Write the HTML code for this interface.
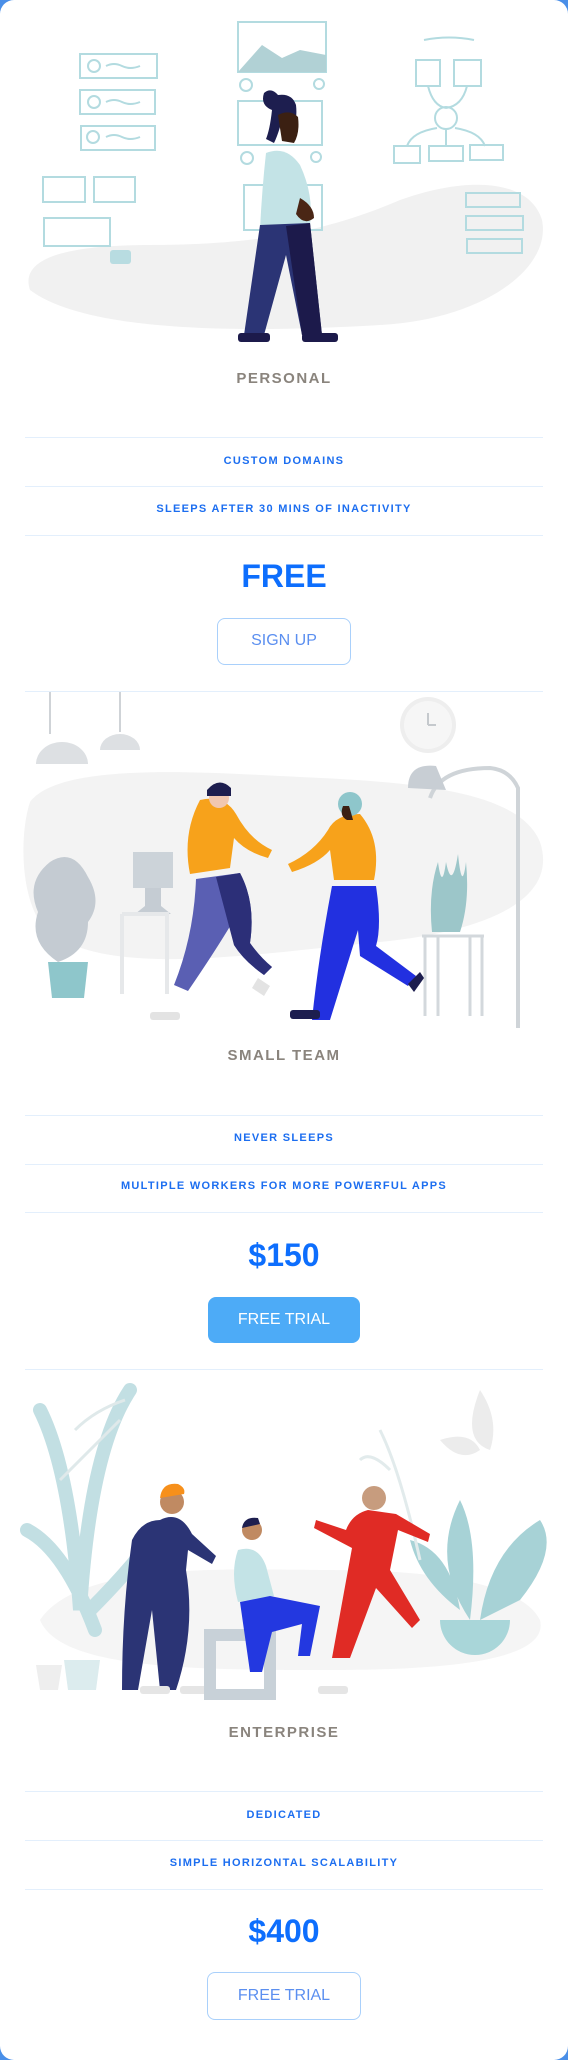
<!DOCTYPE html>
<html><head><meta charset="utf-8"><style>
*{margin:0;padding:0;box-sizing:border-box}
html,body{width:568px;height:2060px;background:#4a8fe8;overflow:hidden}
.card{position:absolute;left:0;top:0;width:568px;height:2060px;background:#fff;border-radius:14px;overflow:hidden;font-family:"Liberation Sans",sans-serif}
.t{position:absolute;left:0;width:568px;text-align:center}
.title{color:#8a847d;font-size:15px;font-weight:bold;letter-spacing:1.5px}
.feat{color:#1c6ef0;font-size:11px;font-weight:bold;letter-spacing:1.3px}
.price{color:#0d6efd;font-size:32px;font-weight:bold}
.line{position:absolute;left:25px;width:518px;height:1px;background:#e3effc}
.btn{position:absolute;border-radius:8px;text-align:center;font-size:16px}
.ob{border:1.5px solid #a9d0fb;color:#5b8ff0;background:#fff}
.fb{background:#4dabf7;color:#fff}
svg{position:absolute;left:0}
</style></head><body><div class="card">

<svg style="top:0" width="568" height="350" viewBox="0 0 568 350">
<path d="M30 290 C20 260 60 245 150 245 C260 245 330 230 400 200 C470 175 530 180 542 220 C552 270 480 320 380 325 C260 332 90 335 30 290Z" fill="#f1f1f1"/>
<g fill="none" stroke="#b3dbe0" stroke-width="2">
<rect x="80" y="54" width="77" height="24"/><rect x="80" y="90" width="75" height="24"/><rect x="81" y="126" width="74" height="24"/>
<circle cx="94" cy="66" r="6"/><circle cx="94" cy="102" r="6"/><circle cx="93" cy="137" r="6"/>
<path d="M106 66 q8 -4 16 0 t18 0 M106 102 q8 -4 16 0 t18 0 M106 137 q8 -4 16 0 t18 0"/>
<rect x="43" y="177" width="42" height="25"/><rect x="94" y="177" width="41" height="25"/><rect x="44" y="218" width="66" height="28"/>
<rect x="238" y="22" width="88" height="50"/><rect x="238" y="101" width="84" height="44"/><rect x="244" y="185" width="78" height="45"/>
<circle cx="246" cy="85" r="6"/><circle cx="319" cy="84" r="5"/><circle cx="247" cy="158" r="6"/><circle cx="316" cy="157" r="5"/>
<rect x="416" y="60" width="24" height="26"/><rect x="454" y="60" width="27" height="26"/><circle cx="446" cy="118" r="11"/>
<rect x="394" y="146" width="26" height="17"/><rect x="429" y="146" width="34" height="15"/><rect x="470" y="145" width="33" height="15"/>
<path d="M428 86 q5 20 18 22 M467 86 q-5 20 -21 22 M446 129 v18 M437 128 q-25 4 -30 18 M455 128 q25 4 30 18 M424 40 q25 -5 50 0"/>
<rect x="466" y="193" width="54" height="14"/><rect x="466" y="216" width="57" height="14"/><rect x="467" y="239" width="55" height="14"/>
</g>
<path d="M238 72 L262 45 L282 58 L300 50 L326 55 L326 72Z" fill="#b1d1d5"/>
<rect x="110" y="250" width="21" height="14" rx="3" fill="#b8dce1"/>
<path d="M272 110 q-12 -5 -8 -17 q7 -6 14 2 q14 -2 18 10 q2 18 -6 24 l-10 -2 q-3 10 -6 16 l-8 -4 q4 -10 6 -29z" fill="#1d1e4f"/>
<path d="M278 115 q12 -6 20 2 q2 16 -4 26 l-12 -2z" fill="#3b2012"/>
<path d="M266 153 q20 -8 34 12 q14 30 10 60 l-50 4 q2 -40 6 -76z" fill="#c3e3e6"/>
<path d="M260 225 l50 -2 l12 112 l-20 0 l-16 -80 l-22 80 l-20 0z" fill="#2b3475"/>
<path d="M286 226 l24 -3 l12 112 l-20 0z" fill="#1c1a4b"/>
<rect x="238" y="333" width="32" height="9" rx="3" fill="#1c1a4b"/><rect x="302" y="333" width="36" height="9" rx="3" fill="#1c1a4b"/>
<path d="M300 198 q14 8 14 20 q-10 8 -18 -4z" fill="#4a2615"/>
</svg>
<div class="t title" style="top:370px">PERSONAL</div>
<div class="line" style="top:437px"></div>
<div class="t feat" style="top:455px">CUSTOM DOMAINS</div>
<div class="line" style="top:486px"></div>
<div class="t feat" style="top:503px">SLEEPS AFTER 30 MINS OF INACTIVITY</div>
<div class="line" style="top:535px"></div>
<div class="t price" style="top:558px">FREE</div>
<div class="btn ob" style="left:217px;top:618px;width:134px;height:47px;line-height:44px">SIGN UP</div>
<div class="line" style="top:691px"></div>

<svg style="top:692px" width="568" height="340" viewBox="0 0 568 340">
<path d="M30 110 C60 70 200 80 300 85 C420 90 520 100 540 150 C560 210 480 240 380 250 C250 262 90 290 40 230 C20 200 20 140 30 110Z" fill="#f3f3f3"/>
<path d="M50 0 v42 M120 0 v40" stroke="#cfd3d7" stroke-width="2"/>
<path d="M36 72 a26 22 0 0 1 52 0z M100 58 a20 16 0 0 1 40 0z" fill="#dde0e3"/>
<circle cx="428" cy="33" r="28" fill="#eeeeee"/><circle cx="428" cy="33" r="24" fill="#f6f6f6"/>
<path d="M428 33 v-12 M428 33 h8" stroke="#c5c9cd" stroke-width="2"/>
<path d="M430 106 q10 -30 60 -30 q20 2 28 20 v240" fill="none" stroke="#cfd4d8" stroke-width="4"/>
<path d="M408 96 q0 -25 28 -22 l10 24z" fill="#c8ced4"/>
<path d="M425 244 v80 M438 244 v80 M470 244 v80 M482 244 v80 M422 244 h62" stroke="#d3d8dc" stroke-width="3"/>
<path d="M432 240 q-4 -40 6 -70 q4 30 8 0 q6 30 12 -8 q4 40 8 8 q4 40 -6 70z" fill="#9cc6c9"/>
<rect x="133" y="160" width="40" height="36" fill="#ccd3d9"/><path d="M145 196 v18 l-10 8 h36 l-10 -8 v-18z" fill="#c5ccd3"/>
<path d="M122 222 h45 v80 M122 222 v80" stroke="#e6e8ea" stroke-width="4" fill="none"/>
<path d="M50 170 q-25 20 -12 50 q-10 30 20 50 q30 -10 30 -40 q15 -20 0 -45 q-15 -30 -38 -15z" fill="#c4cbd2"/>
<path d="M48 270 h40 l-4 36 h-32z" fill="#8ec6cb"/>
<path d="M200 108 q24 -6 36 14 q14 26 36 36 l-4 8 q-22 -6 -34 -20 l-4 30 l-40 6 q-8 -40 10 -74z" fill="#f7a21b"/>
<circle cx="219" cy="106" r="10" fill="#f1c7b0"/><path d="M207 98 q12 -14 24 -2 v8 h-24z" fill="#1d1e4f"/>
<path d="M196 187 l44 -6 q16 30 10 70 q10 14 22 24 l-8 8 q-20 -14 -30 -30 l-2 -22 q-18 30 -44 68 l-14 -6 q20 -50 22 -106z" fill="#5a5fb3"/>
<path d="M216 185 l24 -4 q16 30 10 70 q10 14 22 24 l-8 8 q-20 -14 -30 -30z" fill="#2c2f78"/>
<rect x="150" y="320" width="30" height="8" rx="3" fill="#e3e3e3"/><path d="M258 286 l12 8 l-6 10 l-12 -8z" fill="#e3e3e3"/>
<path d="M360 122 q-24 0 -32 16 q-14 22 -40 34 l4 8 q26 -8 38 -22 l4 30 h40 q8 -40 -14 -66z" fill="#f7a21b"/>
<circle cx="350" cy="112" r="12" fill="#8ec6cb"/><path d="M343 114 q-4 10 4 14 h6 q-2 -8 -4 -14z" fill="#3b2012"/>
<path d="M332 194 h44 q6 40 0 60 l40 30 l-8 10 l-48 -30 l-2 -26 l-28 90 h-18 q6 -60 20 -134z" fill="#2230e0"/>
<rect x="290" y="318" width="30" height="9" rx="3" fill="#1d1e4f"/><path d="M408 292 l12 -12 l4 6 l-10 14z" fill="#1d1e4f"/>
</svg>
<div class="t title" style="top:1047px">SMALL TEAM</div>
<div class="line" style="top:1115px"></div>
<div class="t feat" style="top:1132px">NEVER SLEEPS</div>
<div class="line" style="top:1164px"></div>
<div class="t feat" style="top:1180px">MULTIPLE WORKERS FOR MORE POWERFUL APPS</div>
<div class="line" style="top:1212px"></div>
<div class="t price" style="top:1237px">$150</div>
<div class="btn fb" style="left:208px;top:1297px;width:152px;height:46px;line-height:46px">FREE TRIAL</div>
<div class="line" style="top:1369px"></div>

<svg style="top:1370px" width="568" height="330" viewBox="0 0 568 330">
<path d="M40 250 C80 190 240 200 330 200 C420 200 520 210 540 250 C550 290 450 300 330 300 C200 300 60 300 40 250Z" fill="#f5f5f5"/>
<path d="M40 40 q30 60 40 200 q10 -160 50 -220 M95 260 q-30 -80 -68 -100 M90 240 q40 -40 70 -80" fill="none" stroke="#c2dfe3" stroke-width="14" stroke-linecap="round"/>
<path d="M75 60 q20 -20 50 -30 M60 110 l60 -60" stroke="#dfe9ea" stroke-width="3" fill="none"/>
<path d="M64 290 h36 l-4 30 h-28z" fill="#dcecee"/><path d="M36 295 h26 l-4 25 h-18z" fill="#eeeeee"/>
<path d="M480 20 q20 30 10 60 q-30 -10 -10 -60z M440 70 q30 -10 40 10 q-20 14 -40 -10z" fill="#ececec"/>
<path d="M470 250 q-40 -60 -10 -120 q20 40 10 120z M480 250 q10 -70 60 -100 q20 30 -20 80z M460 240 q-40 -30 -50 -70 q40 10 50 70z" fill="#a7d2d6"/>
<path d="M440 250 a35 35 0 0 0 70 0z" fill="#a9d6d9"/>
<path d="M380 60 q20 40 40 130 M390 100 q-20 -20 -30 -10" stroke="#e2ebec" stroke-width="3" fill="none"/>
<path d="M160 150 q20 -10 32 14 l24 22 l-4 8 l-24 -14 l-2 20 q10 60 -10 120 l-16 0 l-8 -80 l-14 80 h-16 q0 -80 10 -150 q10 -20 28 -20z" fill="#2b3475"/>
<circle cx="172" cy="132" r="12" fill="#c08a62"/><path d="M160 128 q2 -16 18 -14 q8 4 6 10 l-24 4z" fill="#f7901b"/>
<rect x="140" y="316" width="30" height="8" rx="3" fill="#e5e5e5"/><rect x="180" y="316" width="30" height="8" rx="3" fill="#e5e5e5"/>
<path d="M210 265 h60 v60 h-60z" fill="none" stroke="#c8d1d8" stroke-width="12"/>
<path d="M238 180 q20 -6 28 16 l8 30 l-36 6 q-8 -30 0 -52z" fill="#c3e3e6"/><circle cx="252" cy="160" r="10" fill="#c08a62"/><path d="M242 158 q2 -12 16 -10 l2 6z" fill="#1d1e4f"/>
<path d="M240 232 l30 -6 l50 10 l-10 50 h-12 l4 -32 l-30 8 l-10 40 h-12z" fill="#2338e0"/>
<path d="M368 140 q-16 4 -22 20 l-30 -10 l-2 8 l38 20 l-20 110 h18 l26 -70 l36 40 l8 -8 l-30 -50 l8 -40 l30 12 l2 -8 l-34 -20z" fill="#e02b25"/>
<circle cx="374" cy="128" r="12" fill="#c79c7e"/>
<rect x="318" y="316" width="30" height="8" rx="3" fill="#e5e5e5"/>
</svg>
<div class="t title" style="top:1724px">ENTERPRISE</div>
<div class="line" style="top:1791px"></div>
<div class="t feat" style="top:1809px">DEDICATED</div>
<div class="line" style="top:1840px"></div>
<div class="t feat" style="top:1857px">SIMPLE HORIZONTAL SCALABILITY</div>
<div class="line" style="top:1889px"></div>
<div class="t price" style="top:1913px">$400</div>
<div class="btn ob" style="left:207px;top:1972px;width:154px;height:48px;line-height:45px">FREE TRIAL</div>
</div></body></html>
